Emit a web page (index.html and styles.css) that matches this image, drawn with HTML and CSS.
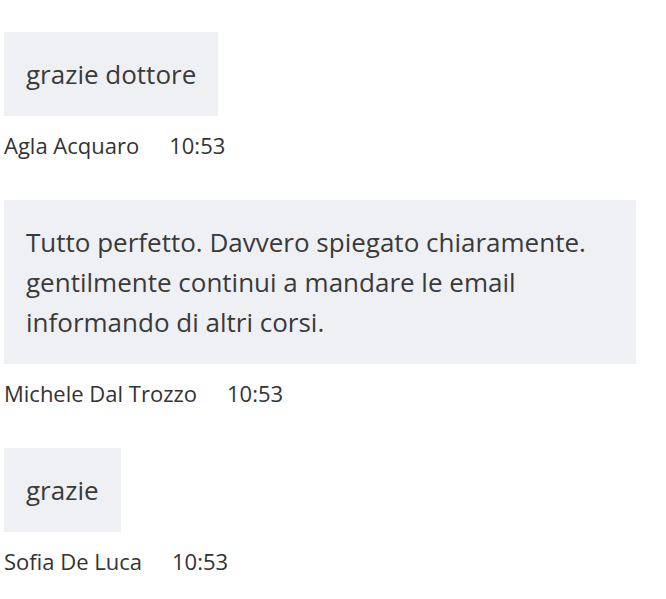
FILE: index.html
```html
<!DOCTYPE html>
<html>
<head>
<meta charset="utf-8">
<link rel="stylesheet" href="styles.css">
</head>
<body>
<div class="chat">
  <div class="msg">
    <div class="bubble">grazie dottore</div>
    <div class="meta"><span class="name">Agla Acquaro</span><span class="time">10:53</span></div>
  </div>
  <div class="msg">
    <div class="bubble">Tutto perfetto. Davvero spiegato chiaramente. gentilmente continui a mandare le email informando di altri corsi.</div>
    <div class="meta"><span class="name">Michele Dal Trozzo</span><span class="time">10:53</span></div>
  </div>
  <div class="msg">
    <div class="bubble">grazie</div>
    <div class="meta"><span class="name">Sofia De Luca</span><span class="time">10:53</span></div>
  </div>
</div>
</body>
</html>
```

FILE: styles.css
```css
html, body {
  margin: 0;
  padding: 0;
  background: #ffffff;
}
body {
  font-family: "Open Sans", "Noto Sans", sans-serif;
  color: #3a3a3a;
}
.chat {
  display: flex;
  flex-direction: column;
  gap: 41px;
  padding: 32px 30px 0 4px;
}
.msg {
  display: flex;
  flex-direction: column;
  align-items: flex-start;
}
.bubble {
  background: #eff0f4;
  font-size: 26px;
  line-height: 40px;
  padding: 22px 22px;
  max-width: 588px;
}
.meta {
  margin-top: 15px;
  font-size: 22px;
  line-height: 28px;
  color: #333;
  display: flex;
  gap: 30px;
}
```
